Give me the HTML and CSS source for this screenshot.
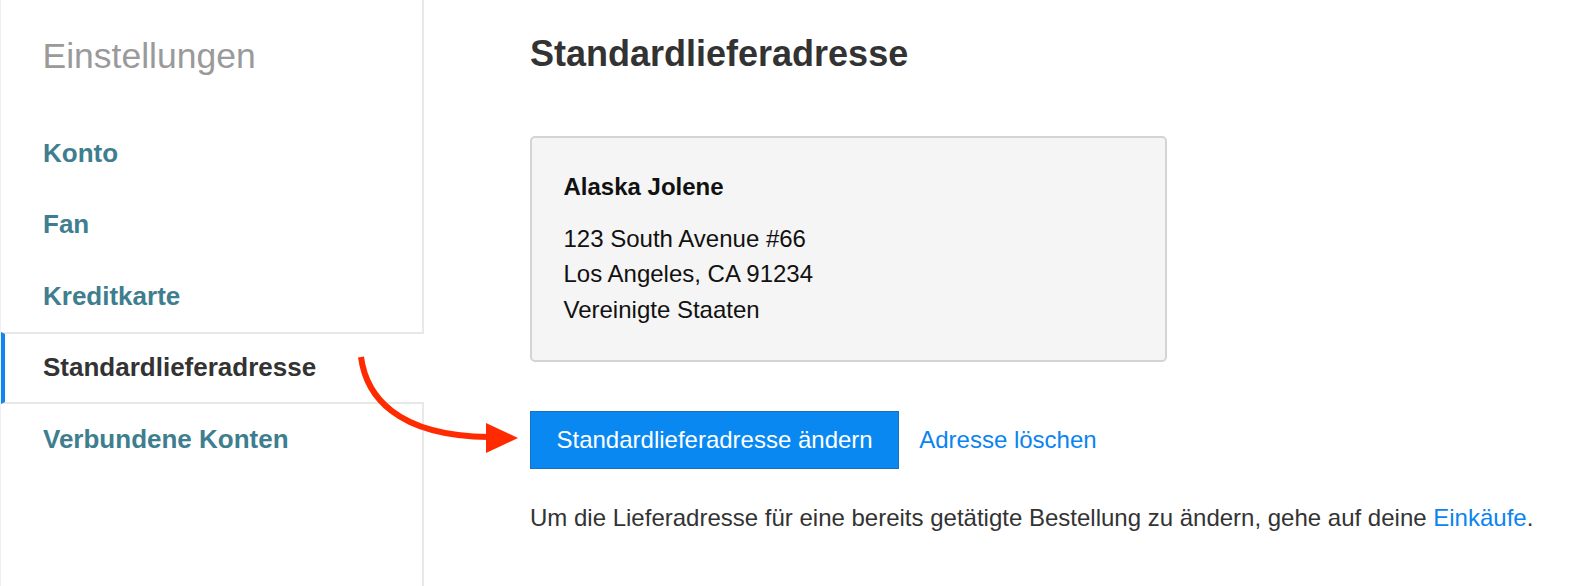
FILE: index.html
```html
<!DOCTYPE html>
<html lang="de">
<head>
<meta charset="utf-8">
<title>Einstellungen – Standardlieferadresse</title>
<link rel="stylesheet" href="styles.css">
</head>
<body>
<div class="page">
  <aside class="sidebar">
    <div class="sidebar-title">Einstellungen</div>
    <nav class="nav">
      <a class="nav-item" href="#">Konto</a>
      <a class="nav-item" href="#">Fan</a>
      <a class="nav-item" href="#">Kreditkarte</a>
      <a class="nav-item active" href="#">Standardlieferadresse</a>
      <a class="nav-item" href="#">Verbundene Konten</a>
    </nav>
  </aside>
  <main class="content">
    <h1 class="heading">Standardlieferadresse</h1>
    <div class="address-box">
      <div class="address-name">Alaska Jolene</div>
      <div class="address-lines">
        <div>123 South Avenue #66</div>
        <div>Los Angeles, CA 91234</div>
        <div>Vereinigte Staaten</div>
      </div>
    </div>
    <div class="actions">
      <button class="btn-primary" type="button">Standardlieferadresse ändern</button>
      <a class="link" href="#">Adresse löschen</a>
    </div>
    <p class="note">Um die Lieferadresse für eine bereits getätigte Bestellung zu ändern, gehe auf deine <a class="link" href="#">Einkäufe</a>.</p>
  </main>
  <svg class="arrow" width="1594" height="586" viewBox="0 0 1594 586" aria-hidden="true">
    <path d="M361 357 C366 395 395 436 489 437" fill="none" stroke="#ff2a00" stroke-width="6" stroke-linecap="butt"/>
    <polygon points="486,423 518,438 486,453" fill="#ff2a00"/>
  </svg>
</div>
</body>
</html>
```
FILE: styles.css
```css
* { box-sizing: border-box; }

html, body {
  margin: 0;
  padding: 0;
  background: #ffffff;
}

body {
  font-family: "Liberation Sans", Arial, Helvetica, sans-serif;
  color: #333333;
}

.page {
  position: relative;
  display: flex;
  min-height: 586px;
  width: 1594px;
  overflow: hidden;
}

.sidebar {
  flex: 0 0 423.5px;
  width: 423.5px;
  min-height: 586px;
  border-left: 1px solid #efefef;
  border-right: 2px solid #e8e8e8;
  padding-top: 35.5px;
}

.sidebar-title {
  font-size: 35.5px;
  line-height: 40px;
  color: #9a9a9a;
  padding-left: 41.5px;
  margin-bottom: 42px;
}

.nav {
  display: flex;
  flex-direction: column;
}

.nav-item {
  display: block;
  height: 71.5px;
  line-height: 67.5px;
  border-top: 2px solid transparent;
  border-bottom: 2px solid transparent;
  border-left: 4px solid transparent;
  padding-left: 38px;
  font-size: 26px;
  font-weight: bold;
  color: #3e7e8f;
  text-decoration: none;
  white-space: nowrap;
}

.nav-item.active {
  color: #333333;
  background: #ffffff;
  border-top-color: #e8e8e8;
  border-bottom-color: #e8e8e8;
  border-left-color: #1084f0;
  margin-right: -2px;
  position: relative;
  z-index: 1;
}

.content {
  flex: 1 1 auto;
  padding-left: 106.5px;
  padding-top: 32px;
}

.heading {
  margin: 0;
  font-size: 36px;
  line-height: 44px;
  font-weight: bold;
  color: #333333;
}

.address-box {
  margin-top: 60px;
  width: 637px;
  height: 226px;
  background: #f5f5f5;
  border: 2px solid #d4d4d4;
  border-radius: 5px;
  padding: 34.5px 31px 0 31.5px;
  color: #111111;
}

.address-name {
  font-size: 24px;
  line-height: 28px;
  font-weight: bold;
}

.address-lines {
  margin-top: 20px;
  font-size: 24px;
  line-height: 35.5px;
}

.actions {
  margin-top: 49px;
  display: flex;
  align-items: center;
  gap: 20px;
}

.btn-primary {
  height: 57.5px;
  padding: 0 25.5px;
  margin: 0;
  background: #0a88f2;
  border: 1px solid #1f6fbf;
  border-radius: 0;
  color: #ffffff;
  font-family: "Liberation Sans", Arial, Helvetica, sans-serif;
  font-size: 24px;
  line-height: 55px;
  cursor: pointer;
}

.link {
  color: #0a84f0;
  text-decoration: none;
  font-size: 24px;
}

.note {
  margin: 34px 0 0 0;
  font-size: 24px;
  line-height: 30px;
  color: #333333;
  white-space: nowrap;
}

.arrow {
  position: absolute;
  top: 0;
  left: 0;
  pointer-events: none;
  z-index: 2;
}
```
